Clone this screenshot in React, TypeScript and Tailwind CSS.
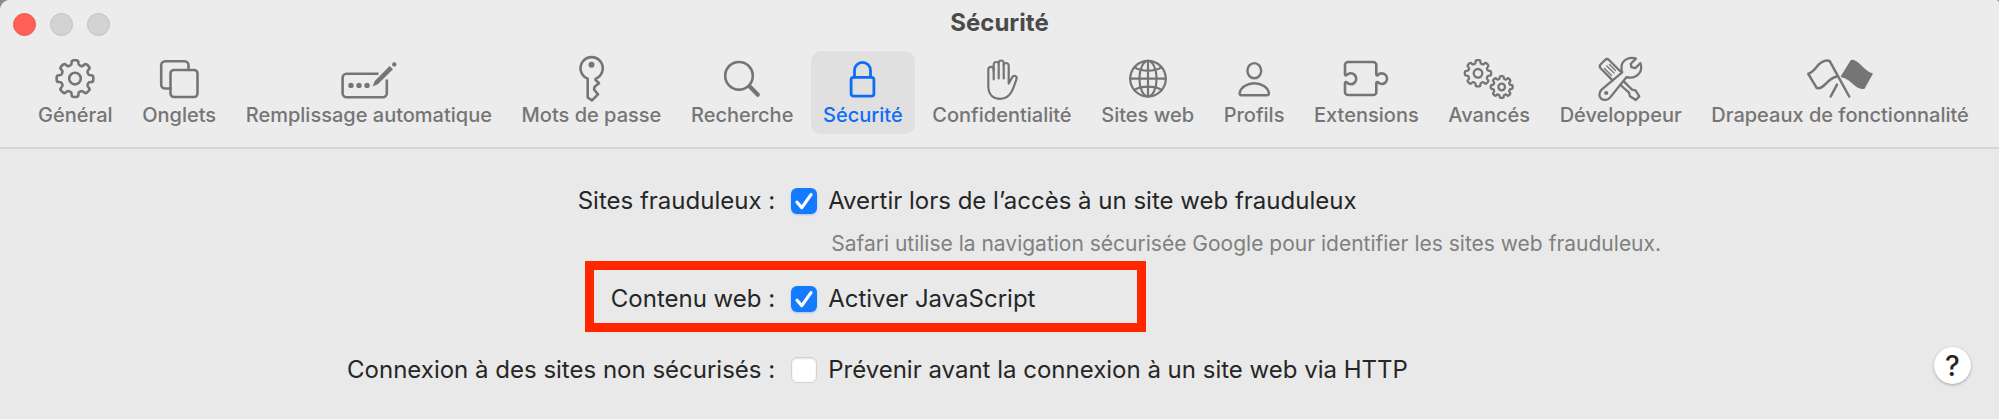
import { useState } from "react";
import type { ReactNode } from "react";

function gearPath(cx: number, cy: number, tip: number, valley: number) {
  const at = (radius: number, degrees: number) => {
    const angle = (degrees * Math.PI) / 180;
    return `${(cx + radius * Math.sin(angle)).toFixed(2)} ${(cy - radius * Math.cos(angle)).toFixed(2)}`;
  };
  const mid = (tip + valley) / 2;
  let d = "";
  for (let i = 0; i < 8; i++) {
    const a = i * 45;
    d += `${i === 0 ? "M" : "L"}${at(mid, a - 12)}`;
    d += `Q${at(tip, a - 11)} ${at(tip, a - 5)}L${at(tip, a + 5)}`;
    d += `Q${at(tip, a + 11)} ${at(mid, a + 12)}`;
    d += `Q${at(valley, a + 14)} ${at(valley, a + 19)}L${at(valley, a + 26)}Q${at(valley, a + 31)} ${at(mid, a + 33)}`;
  }
  return d + "Z";
}

function Icon({ width, stroke = 2.6, children }: { width: number; stroke?: number; children: ReactNode }) {
  return (
    <svg
      width={width}
      height={48}
      viewBox={`0 0 ${width} 48`}
      fill="none"
      stroke="currentColor"
      strokeWidth={stroke}
      strokeLinecap="round"
      strokeLinejoin="round"
      aria-hidden="true"
    >
      {children}
    </svg>
  );
}

const tabs: { name: string; icon: ReactNode }[] = [
  {
    name: "Général",
    icon: (
      <Icon width={40}>
        <path d={gearPath(20, 23.6, 18.4, 14)} />
        <circle cx="20" cy="23.6" r="5.8" />
      </Icon>
    ),
  },
  {
    name: "Onglets",
    icon: (
      <Icon width={41}>
        <path d="M11.5 33.5H6.2a4 4 0 0 1-4-4V10.2a4 4 0 0 1 4-4h19.3a4 4 0 0 1 4 4V15" />
        <rect x="11.5" y="15" width="27" height="27" rx="3.5" />
      </Icon>
    ),
  },
  {
    name: "Remplissage automatique",
    icon: (
      <Icon width={58}>
        <path d="M38.5 18.8H6.6a4 4 0 0 0-4 4v15.5a4 4 0 0 0 4 4h36.2a4 4 0 0 0 4-4V24.5" strokeLinecap="butt" />
        <g fill="currentColor" stroke="none">
          <circle cx="11" cy="30.4" r="2.7" />
          <circle cx="19" cy="30.4" r="2.7" />
          <circle cx="27" cy="30.4" r="2.7" />
          <path d="M49.6 10.9 53 14.3 37.8 29.2 32.6 31.6 34.8 26.1Z" />
          <circle cx="54.3" cy="9.4" r="2.2" />
        </g>
      </Icon>
    ),
  },
  {
    name: "Mots de passe",
    icon: (
      <Icon width={29}>
        <path d="M10.7 23.6A11.1 11.1 0 1 1 18.6 23.6V25L22 28.3 17.6 31.8 17 34.5 21 39.3 15 45.4 10.7 42.5Z" />
        <circle cx="14.5" cy="9.8" r="3" fill="currentColor" stroke="none" />
      </Icon>
    ),
  },
  {
    name: "Recherche",
    icon: (
      <Icon width={40}>
        <circle cx="17" cy="20.8" r="13.8" />
        <path d="M27.5 31.3 35.8 39.8" strokeWidth="4.2" />
      </Icon>
    ),
  },
  {
    name: "Sécurité",
    icon: (
      <Icon width={29} stroke={2.8}>
        <rect x="3.1" y="22.3" width="22.8" height="18.8" rx="2.4" />
        <path d="M6.5 22V15.4a8 8 0 0 1 16 0V22" />
      </Icon>
    ),
  },
  {
    name: "Confidentialité",
    icon: (
      <Icon width={32} stroke={2.2}>
        <path d="M7.7 24.5V14.5a2.7 2.7 0 0 0-5.4 0V31c0 8 4.5 12.8 12 12.8 6 0 9-2.5 11.5-7.5 2-4 3.6-9 4.8-12.6.8-2.4-2.8-4.2-4.3-1.6L22.7 28.5V10.5a2.5 2.5 0 0 0-5 0V23.5" />
        <path d="M17.7 10.5V8a2.5 2.5 0 0 0-5 0V23.5M12.7 9.5a2.5 2.5 0 0 0-5 0V16" />
      </Icon>
    ),
  },
  {
    name: "Sites web",
    icon: (
      <Icon width={40} stroke={2.2}>
        <circle cx="20" cy="23.7" r="17.8" />
        <ellipse cx="20" cy="23.7" rx="8.6" ry="17.8" />
        <path d="M20 6v35.4M2.2 23.7h35.6M6.4 12.4c7 4.4 20.2 4.4 27.2 0M6.4 35c7-4.4 20.2-4.4 27.2 0" />
      </Icon>
    ),
  },
  {
    name: "Profils",
    icon: (
      <Icon width={34} stroke={2.4}>
        <ellipse cx="17.3" cy="15.7" rx="6.9" ry="7.6" />
        <path d="M4.5 40.2h25.6c1.6 0 2-1 1.8-2.4C31 32.5 24.5 28.3 17.3 28.3S3.6 32.5 2.7 37.8c-.2 1.4.2 2.4 1.8 2.4z" />
      </Icon>
    ),
  },
  {
    name: "Extensions",
    icon: (
      <Icon width={46}>
        <path d="M5 7H30.3a3 3 0 0 1 3 3V19.5a1 1 0 0 0 1.5.7A5.3 5.3 0 1 1 34.8 27.2a1 1 0 0 0-1.5.7V37a3 3 0 0 1-3 3H5a3 3 0 0 1-3-3V27.9a1 1 0 0 1 1.5-.7A5.5 5.5 0 1 0 3.5 20.2a1 1 0 0 1-1.5-.7V10a3 3 0 0 1 3-3z" />
      </Icon>
    ),
  },
  {
    name: "Avancés",
    icon: (
      <Icon width={52} stroke={2.3}>
        <path d={gearPath(15, 18.3, 13.2, 10)} />
        <circle cx="15" cy="18.3" r="4.3" />
        <path d={gearPath(38.7, 32, 11, 8.4)} />
        <circle cx="38.7" cy="32" r="3.3" />
      </Icon>
    ),
  },
  {
    name: "Développeur",
    icon: (
      <Icon width={45} stroke={2.3}>
        <path d="M38 3.6C32 1.5 24.9 4.4 23.6 10.4c-.4 2.3-.2 4.6.6 6.9L3.6 34.6c-3 3-2.8 7-.4 9 2.6 2.2 6.8 1.6 9-1.2L28.4 22.2c7 1.8 14.4-2 14.8-9.4.1-1.6-.2-3.2-.8-4.7L37.2 13.2 33.4 12.2 32.8 8.7Z" />
        <circle cx="8.2" cy="38" r="2.1" fill="currentColor" stroke="none" />
        <path d="M14.6 25.4 2.6 13.2C1.4 12 1.5 10.6 2.5 9.5L7 5c1.3-1.3 2.8-1.2 4 0L23 17" />
        <path d="M6.5 13.5 13.5 20.5M8.8 11 16 18M11.5 9.5 17.5 15.5" strokeWidth="1.3" />
        <path d="M22.5 30 31 37.6 32 41.3 37.8 45 41.3 41.4 37.5 35.3 34 34.6 25.8 26.4" />
      </Icon>
    ),
  },
  {
    name: "Drapeaux de fonctionnalité",
    icon: (
      <Icon width={68} stroke={2.5}>
        <path d="M43.2 41.5 23.7 6.2C20.5 4.4 15.5 6.6 12 10.2 9 14 6.5 17.6 2.3 18.8L10.8 33.1C18.5 34.5 20 24.5 30.5 21.5" />
        <path d="M31 29.6 24.7 41.5" />
        <path d="M45.5 5.5C52.5 4.5 56 16 66 18.9L57.8 33.3C48 34 46.5 23 35.6 21.5Z" fill="currentColor" strokeWidth="1.6" />
      </Icon>
    ),
  },
];

function Toolbar() {
  const [active, setActive] = useState("Sécurité");
  return (
    <nav aria-label="Réglages" className="flex justify-between pr-[18px] pl-[26px] font-medium">
      {tabs.map(({ name, icon }) => (
        <button
          key={name}
          type="button"
          aria-current={name === active ? "page" : undefined}
          onClick={() => setActive(name)}
          className={
            name === active
              ? "flex flex-col items-center rounded-[10px] bg-[#e0e0e0] px-3 pt-1 pb-[7px] text-[#0f6cf5]"
              : "flex flex-col items-center rounded-[10px] px-3 pt-1 pb-[7px] text-[#757575]"
          }
        >
          {icon}
          <span className="text-[20px] leading-6 whitespace-nowrap">{name}</span>
        </button>
      ))}
    </nav>
  );
}

function Checkbox({ id, defaultChecked = false }: { id: string; defaultChecked?: boolean }) {
  return (
    <span className="grid shrink-0">
      <input
        id={id}
        type="checkbox"
        defaultChecked={defaultChecked}
        className="peer col-start-1 row-start-1 size-[26px] appearance-none rounded-[6px] border border-[#d2d2d2] bg-white shadow-[inset_0_1px_2px_rgba(0,0,0,0.12)] checked:border-transparent checked:bg-[#147bff] checked:shadow-[0_1px_2px_rgba(20,100,255,0.3)]"
      />
      <svg
        viewBox="0 0 26 26"
        className="pointer-events-none invisible col-start-1 row-start-1 size-[26px] peer-checked:visible"
        fill="none"
        stroke="white"
        strokeWidth="3.2"
        strokeLinecap="round"
        strokeLinejoin="round"
        aria-hidden="true"
      >
        <path d="M6 14.2 10.8 19.6 20 6.6" />
      </svg>
    </span>
  );
}

const rowColumns = "grid grid-cols-[43fr_67fr] items-center gap-x-4";

export default function App() {
  return (
    <div className="min-h-screen bg-[#8c8c8c] font-['Inter',sans-serif]">
      <div className="flex min-h-screen flex-col overflow-hidden rounded-tl-[10px] rounded-tr-[4px] border-b border-[#fafafa] bg-[#e9e9e9]">
        <header className="border-b-2 border-[#d6d6d6] bg-[#ececec] pb-[13px]">
          <div className="grid h-[51px] grid-cols-[1fr_auto_1fr] items-start px-[13px]">
            <div className="flex gap-[14px] pt-[13px]">
              <button type="button" aria-label="Fermer" className="size-[23px] rounded-full border border-[#ee5a52] bg-[#ff5f57]" />
              <button type="button" aria-label="Réduire" disabled className="size-[23px] rounded-full border border-[#c3c3c3] bg-[#d3d3d3]" />
              <button type="button" aria-label="Agrandir" disabled className="size-[23px] rounded-full border border-[#c3c3c3] bg-[#d3d3d3]" />
            </div>
            <h1 className="pt-[9px] text-[24px] leading-7 font-bold text-[#4a4a4a]">Sécurité</h1>
          </div>
          <Toolbar />
        </header>

        <main className="flex-1 pt-9 text-[24px] leading-8 text-[#262626]">
          <div className={rowColumns}>
            <span className="text-right">Sites frauduleux :</span>
            <div className="flex items-center gap-[11px]">
              <Checkbox id="fraud" defaultChecked />
              <label htmlFor="fraud">Avertir lors de l’accès à un site web frauduleux</label>
            </div>
            <p className="col-start-2 mt-[13px] pl-10 text-[21px] leading-7 text-[#808080]">
              Safari utilise la navigation sécurisée Google pour identifier les sites web frauduleux.
            </p>
          </div>

          <div className={`${rowColumns} mt-[25px]`}>
            <span className="text-right">Contenu web :</span>
            <div className="relative flex items-center gap-[11px]">
              <div className="pointer-events-none absolute -top-[22px] -left-[206px] h-[71px] w-[561px] border-[9px] border-[#ff2600]" />
              <Checkbox id="javascript" defaultChecked />
              <label htmlFor="javascript">Activer JavaScript</label>
            </div>
          </div>

          <div className={`${rowColumns} mt-8`}>
            <span className="text-right">Connexion à des sites non sécurisés :</span>
            <div className="flex h-[45px] items-center gap-[11px] pr-7">
              <Checkbox id="http" />
              <label htmlFor="http">Prévenir avant la connexion à un site web via HTTP</label>
              <button
                type="button"
                aria-label="Aide"
                className="ml-auto size-[37px] self-start rounded-full bg-white text-[28px] leading-none font-medium shadow-[0_1px_3px_rgba(0,0,0,0.3)]"
              >
                ?
              </button>
            </div>
          </div>
        </main>
      </div>
    </div>
  );
}
